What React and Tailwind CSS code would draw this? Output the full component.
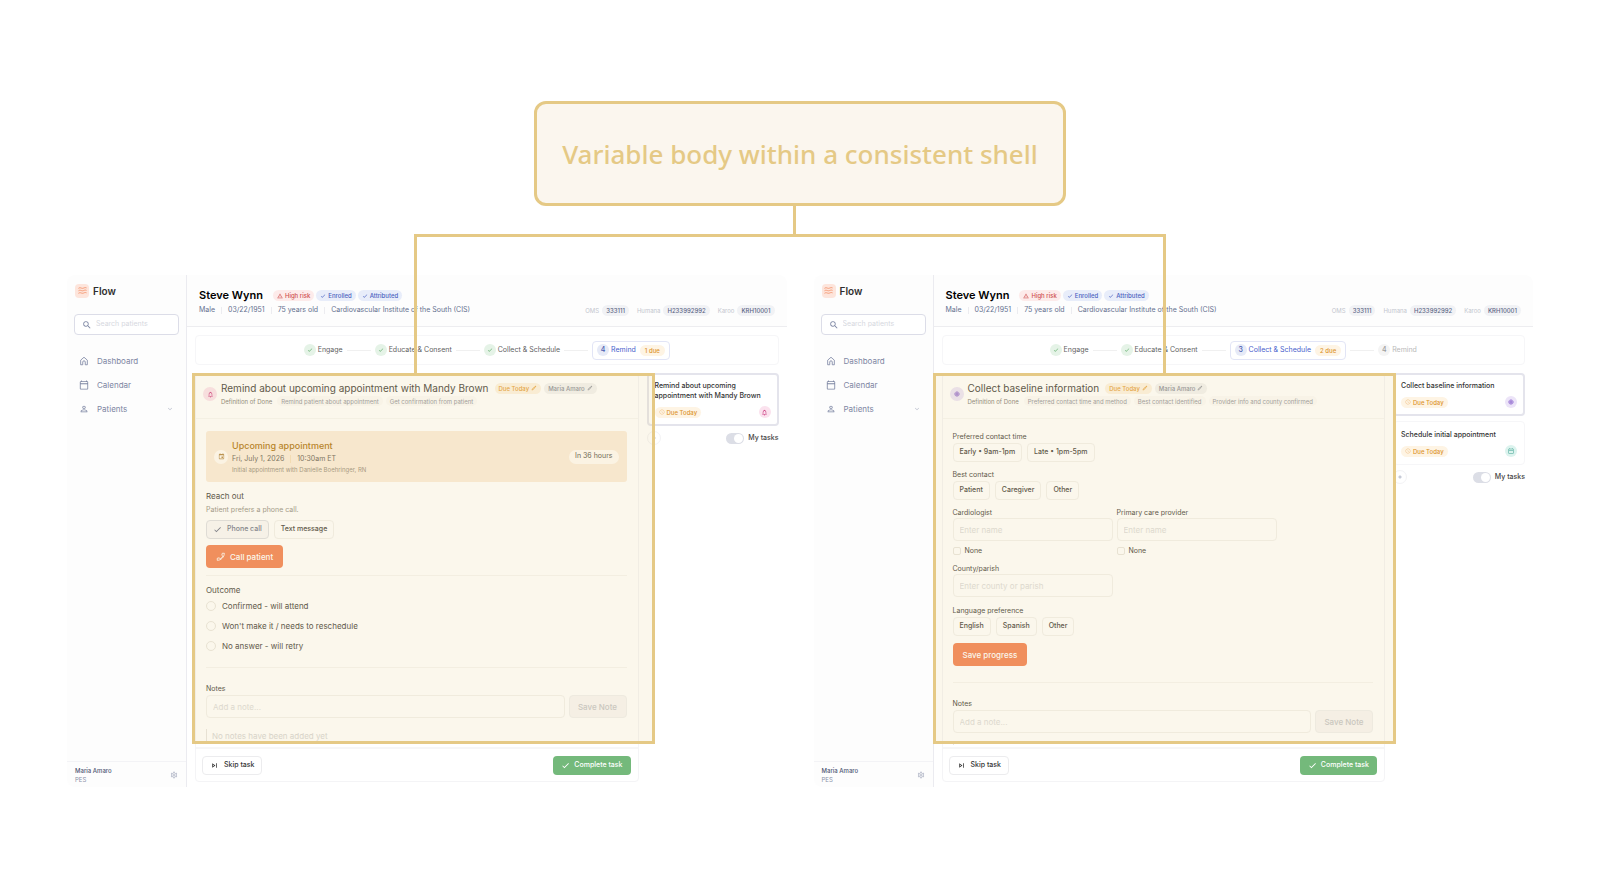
import React, { useState } from "react";
import {
    MdSearch,
    MdCheck,
    MdOutlineCalendarToday,
    MdOutlineSettings,
    MdPersonOutline,
    MdKeyboardArrowDown,
    MdWarningAmber,
    MdNotificationsNone,
    MdEvent,
    MdOutlineEdit,
    MdAccessTime,
    MdOutlineSkipNext,
    MdAdd,
    MdLanguage,
} from "react-icons/md";

const labelStyle = "text-[7px] leading-[10px] text-[#4a473f]";
const inputStyle = "h-[23px] w-full rounded-[4px] border border-[#f2f1ee] bg-transparent px-[6px] text-[8px] text-[#4a473f] placeholder:text-[#dcdcdc] outline-none";
const optionStyle = "flex h-[19px] items-center rounded-[4px] border border-[#f2f1ee] px-[6px] text-[7px] font-medium text-[#4a473f]";

function HomeIcon() {
    return (
        <svg viewBox="0 0 24 24" className="size-[10px]" fill="none" stroke="currentColor" strokeWidth="2">
            <path d="M4 10 12 3l8 7v11h-5v-6.500a3 3 0 0 0-6 0V21H4z" />
        </svg>
    );
}

function PhoneIcon() {
    return (
        <svg viewBox="0 0 24 24" className="size-[10px]" fill="none" stroke="currentColor" strokeWidth="2">
            <path d="M15 3h5c0 9-8 17-17 17v-5l5-1 2 2.500a14 14 0 0 0 6.500-6.500L14 8z" />
        </svg>
    );
}

function Waves() {
    return (
        <span className="flex size-[14px] items-center justify-center rounded-[4px] bg-[#fde5dc] text-[#f4936b]">
            <svg viewBox="0 0 20 16" className="w-[9px]" fill="none" stroke="currentColor" strokeWidth="2">
                <path d="M1 3c4-3 6 0 9 0s5-3 9-1M1 8.500c4-3 6 0 9 0s5-3 9-1M1 14c4-3 6 0 9 0s5-3 9-1" />
            </svg>
        </span>
    );
}

function Sidebar({ id }) {
    return (
        <aside className="flex w-[120px] shrink-0 flex-col rounded-l-lg border-r border-[#ebebf0] bg-[#fdfdfd]">
            <div className="flex items-center gap-1 px-2 pt-[9px] text-[10px] leading-[14px] font-semibold text-[#2f2f2f]">
                <Waves />
                Flow
            </div>
            <label htmlFor={id + "-search"} className="mx-[7px] mt-4 flex h-[21px] items-center gap-1 rounded-[4px] border border-[#dcdde8] bg-white px-[7px] text-[#7d86a3]">
                <MdSearch className="size-[10px] shrink-0" />
                <input id={id + "-search"} type="text" placeholder="Search patients" className="w-full min-w-0 bg-transparent text-[7px] outline-none placeholder:text-[#d6d8e0]" />
            </label>
            <nav className="mt-5 flex flex-col gap-3 px-3 text-[8px] leading-[12px] text-[#7d86a3]">
                <a href="#dashboard" className="flex items-center gap-2"><HomeIcon />Dashboard</a>
                <a href="#calendar" className="flex items-center gap-2"><MdOutlineCalendarToday className="size-[10px]" />Calendar</a>
                <a href="#patients" className="flex items-center gap-2">
                    <MdPersonOutline className="size-[10px]" />Patients
                    <MdKeyboardArrowDown className="ml-auto size-[8px] text-[#b9bdcc]" />
                </a>
            </nav>
            <div className="mt-auto flex items-center justify-between border-t border-[#f3f3f6] px-2 pt-1 pb-[3px]">
                <div className="text-[6px] leading-[9px] text-[#8a91a8]">
                    <p className="font-medium text-[#4d5573]">Maria Amaro</p>
                    <p>PES</p>
                </div>
                <button aria-label="Settings" className="text-[#aeb3c4]"><MdOutlineSettings className="size-[8px]" /></button>
            </div>
        </aside>
    );
}

function HeaderBadge({ risk, children }) {
    return (
        <span className={"flex h-[11px] items-center gap-[2px] rounded-full px-1 text-[6px] font-medium " + (risk ? "bg-[#fdebea] text-[#cf5050]" : "bg-[#e8edfa] text-[#4961c0]")}>
            {risk ? <MdWarningAmber className="size-[6px]" /> : <MdCheck className="size-[6px]" />}
            {children}
        </span>
    );
}

function PatientHeader() {
    const ids = [["OMS", "333111"], ["Humana", "H233992992"], ["Karoo", "KRH10001"]];
    return (
        <header className="h-[52px] rounded-tr-lg border-b border-[#ededf0] bg-[#fdfdfd] px-3 pt-[13px]">
            <div className="flex items-center gap-[2px]">
                <h1 className="mr-2 text-[11px] leading-[15px] font-semibold text-black">Steve Wynn</h1>
                <HeaderBadge risk>High risk</HeaderBadge>
                <HeaderBadge>Enrolled</HeaderBadge>
                <HeaderBadge>Attributed</HeaderBadge>
            </div>
            <div className="flex h-[14px] items-center justify-between text-[7px] text-[#64708f]">
                <div className="flex items-center gap-[6px]">
                    <span>Male</span>
                    <span className="h-[7px] w-px bg-[#ececf0]" />
                    <span>03/22/1951</span>
                    <span className="h-[7px] w-px bg-[#ececf0]" />
                    <span>75 years old</span>
                    <span className="h-[7px] w-px bg-[#ececf0]" />
                    <span>Cardiovascular Institute of the South (CIS)</span>
                </div>
                <div className="flex items-center gap-2 text-[6px] text-[#c3c6ce]">
                    {ids.map(([name, value]) => (
                        <span key={name} className="flex items-center gap-[3px]">
                            {name}
                            <span className="flex h-[11px] items-center rounded-full bg-[#f1f2f5] px-1 font-medium text-[#5d6785]">{value}</span>
                        </span>
                    ))}
                </div>
            </div>
        </header>
    );
}

function Stepper({ active, due }) {
    const steps = ["Engage", "Educate & Consent", "Collect & Schedule", "Remind"];
    return (
        <ol className="flex h-[30px] items-center justify-center gap-1 rounded-[4px] border border-[#f6f6f8] bg-white text-[7px]">
            {steps.map((step, index) => {
                const number = index + 1;
                const isActive = number === active;
                const isDone = number < active;
                return (
                    <React.Fragment key={step}>
                        {index > 0 && <li aria-hidden="true" className="h-px w-6 bg-[#f0f0f0]" />}
                        <li className={"flex items-center gap-[2px] " + (isActive ? "h-[19px] rounded-[4px] border border-[#e2e5f6] px-1 text-[#4860cc]" : isDone ? "text-[#5f5f5f]" : "text-[#b9b9b9]")}>
                            <span className={"flex size-[12px] items-center justify-center rounded-full font-medium " + (isActive ? "bg-[#e6eaf7] text-[#4a5db0]" : isDone ? "bg-[#e5f3e7] text-[#5cab67]" : "bg-[#f4f4f4] text-[#9c9c9c]")}>
                                {isDone ? <MdCheck className="size-[6px]" /> : number}
                            </span>
                            {step}
                            {isActive && <span className="ml-[2px] flex h-[11px] items-center rounded-full bg-[#fef4e4] px-[5px] text-[6px] font-medium text-[#dc932b]">{due} due</span>}
                        </li>
                    </React.Fragment>
                );
            })}
        </ol>
    );
}

function TaskIcon({ type, small }) {
    const size = small ? "size-[12px]" : "size-[14px]";
    const colors = {
        remind: "bg-[#fbe2ee] text-[#cc3f83]",
        collect: "bg-[#ece4f8] text-[#8a62cc]",
        schedule: "bg-[#dcf3ee] text-[#3a9f8d]",
    };
    return (
        <span className={"flex shrink-0 items-center justify-center rounded-full " + size + " " + colors[type]}>
            {type === "remind" && <MdNotificationsNone className="size-[7px]" />}
            {type === "collect" && <MdLanguage className="size-[6px]" />}
            {type === "schedule" && <MdOutlineCalendarToday className="size-[6px]" />}
        </span>
    );
}

function TaskCard({ title, type, selected }) {
    return (
        <article className={"rounded-[4px] bg-white " + (selected ? "border-2 border-[#e4e4ec] px-[6px] py-[6px]" : "border border-[#f6f6f8] px-[7px] pt-2 pb-[7px]")}>
            <h3 className="text-[7px] leading-[10px] font-medium text-[#333333]">{title}</h3>
            <div className="mt-[5px] flex h-[12px] items-center justify-between">
                <span className="flex h-[11px] items-center gap-[2px] rounded-full bg-[#fef4e4] px-1 text-[6px] font-medium text-[#dc932b]">
                    <MdAccessTime className="size-[6px] text-[#f0c48a]" />
                    Due Today
                </span>
                <TaskIcon type={type} small />
            </div>
        </article>
    );
}

function TaskList({ id, tasks }) {
    return (
        <aside className="flex w-[132px] shrink-0 flex-col gap-[5px]">
            {tasks.map((task, index) => (
                <TaskCard key={task.title} title={task.title} type={task.type} selected={index === 0} />
            ))}
            <div className="flex items-center justify-between">
                <button aria-label="Add task" className="flex size-[14px] items-center justify-center rounded-full border border-[#f3f3f5] text-[#7d86a3]"><MdAdd className="size-[6px]" /></button>
                <label htmlFor={id + "-mine"} className="flex items-center gap-1 text-[7px] font-medium text-[#444444]">
                    <input id={id + "-mine"} type="checkbox" defaultChecked className="peer sr-only" />
                    <span className="flex h-[11px] w-[18px] items-center justify-end rounded-full bg-[#dcdee6] px-px"><span className="size-[9px] rounded-full bg-white" /></span>
                    My tasks
                </label>
            </div>
        </aside>
    );
}

function Notes({ id }) {
    return (
        <div className="border-t border-[#f6f5f2] pt-4">
            <label htmlFor={id + "-note"} className={"block " + labelStyle}>Notes</label>
            <div className="mt-px flex gap-1">
                <input id={id + "-note"} type="text" placeholder="Add a note..." className={inputStyle} />
                <button disabled className="h-[23px] w-[58px] shrink-0 rounded-[4px] border border-[#f0f0f0] bg-[#f8f6f6] text-[8px] font-medium text-[#c6c7ca]">Save Note</button>
            </div>
            <p className="mt-[11px] border-l border-[#e8e6e2] pl-[5px] text-[8px] leading-[14px] text-[#d6d6d6]">No notes have been added yet</p>
        </div>
    );
}

function RemindBody() {
    const [outcome, setOutcome] = useState("");
    const outcomes = ["Confirmed - will attend", "Won't make it / needs to reschedule", "No answer - will retry"];
    return (
        <div className="pt-3 pr-[11px] pl-[10px]">
            <section className="flex h-[51px] items-center gap-1 rounded-[3px] bg-[#fbeddb] px-2">
                <span className="flex size-[14px] items-center justify-center rounded-full bg-[#fffbf5] text-[#b58a48]"><MdEvent className="size-[7px]" /></span>
                <div className="text-[#6d675c]">
                    <h3 className="text-[9px] leading-[14px] font-medium text-[#b07818]">Upcoming appointment</h3>
                    <p className="flex items-center gap-[6px] text-[7px] leading-[12px]">
                        Fri, July 1, 2026
                        <span className="h-[8px] w-px bg-[#f6e0bd]" />
                        10:30am ET
                    </p>
                    <p className="text-[6px] leading-[10px] text-[#9c9383]">Initial appointment with Danielle Boehringer, RN</p>
                </div>
                <span className="ml-auto flex h-[14px] items-center rounded-full bg-[#fffbf5] px-[6px] text-[7px] text-[#5c574d]">In 36 hours</span>
            </section>
            <h3 className="mt-2 text-[8px] leading-[12px] text-[#4a473f]">Reach out</h3>
            <p className="mt-[3px] text-[7px] leading-[10px] text-[#98948b]">Patient prefers a phone call.</p>
            <div className="mt-[5px] flex gap-[5px]">
                <button className="flex h-[19px] items-center gap-[5px] rounded-[4px] border border-[#dfe0e4] bg-[#f9f8fa] px-[6px] text-[7px] font-medium text-[#73798c]"><MdCheck className="size-[9px]" />Phone call</button>
                <button className={optionStyle}>Text message</button>
            </div>
            <button className="mt-[6px] flex h-[23px] items-center gap-1 rounded-[4px] bg-[#f28557] px-[10px] text-[8px] font-medium text-white"><PhoneIcon />Call patient</button>
            <div role="radiogroup" aria-labelledby="outcome-title" className="mt-[7px] border-t border-[#f6f5f2] pt-2 pb-[15px]">
                <h3 id="outcome-title" className="text-[8px] leading-[12px] text-[#4a473f]">Outcome</h3>
                <div className="mt-1 flex flex-col gap-2">
                    {outcomes.map((item) => (
                        <label key={item} className="flex items-center gap-[6px] text-[8px] leading-[12px] text-[#4a473f]">
                            <input type="radio" name="outcome" value={item} checked={outcome === item} onChange={() => setOutcome(item)} className="size-[10px] appearance-none rounded-full border border-[#e9e7e1] checked:border-[3px] checked:border-[#f28557]" />
                            {item}
                        </label>
                    ))}
                </div>
            </div>
            <Notes id="remind" />
        </div>
    );
}

function Options({ label, options }) {
    return (
        <div role="group" aria-label={label}>
            <p className={labelStyle}>{label}</p>
            <div className="mt-px flex gap-[5px]">
                {options.map((option) => (
                    <button key={option} className={optionStyle}>{option}</button>
                ))}
            </div>
        </div>
    );
}

function Field({ id, label, placeholder, none }) {
    return (
        <div className="w-[160px]">
            <label htmlFor={id} className={"block " + labelStyle}>{label}</label>
            <input id={id} type="text" placeholder={placeholder} className={"block " + inputStyle} />
            {none && (
                <label className={"mt-[5px] flex items-center gap-1 " + labelStyle}>
                    <input type="checkbox" className="size-[8px] appearance-none rounded-[2px] border border-[#e9e7e1] checked:bg-[#f28557]" />
                    None
                </label>
            )}
        </div>
    );
}

function CollectBody() {
    return (
        <div className="pt-[13px] pr-[11px] pl-[10px]">
            <div className="flex flex-col gap-2">
                <Options label="Preferred contact time" options={["Early • 9am-1pm", "Late • 1pm-5pm"]} />
                <Options label="Best contact" options={["Patient", "Caregiver", "Other"]} />
                <div className="flex gap-1">
                    <Field id="cardiologist" label="Cardiologist" placeholder="Enter name" none />
                    <Field id="provider" label="Primary care provider" placeholder="Enter name" none />
                </div>
                <div className="pb-px">
                    <Field id="county" label="County/parish" placeholder="Enter county or parish" />
                </div>
                <Options label="Language preference" options={["English", "Spanish", "Other"]} />
            </div>
            <button className="mt-[7px] mb-4 flex h-[23px] items-center rounded-[4px] bg-[#f28557] px-[10px] text-[8px] font-medium text-white">Save progress</button>
            <Notes id="collect" />
        </div>
    );
}

function TaskPanel({ type, title, done, children }) {
    return (
        <section className="min-w-0 flex-1 rounded-[4px] border border-[#f4f4f6] bg-white">
            <div className="flex h-[45px] items-center gap-1 border-b border-[#f7f7f5] px-[7px] pb-1">
                <TaskIcon type={type} />
                <div>
                    <div className="flex items-center gap-[3px]">
                        <h2 className="mr-[3px] text-[10px] leading-[14px] text-[#4a473f]">{title}</h2>
                        <span className="flex h-[11px] items-center gap-[2px] rounded-full bg-[#fdf3e2] px-1 text-[6px] font-medium text-[#e5a03c]">Due Today<MdOutlineEdit className="size-[6px]" /></span>
                        <span className="flex h-[11px] items-center gap-[2px] rounded-full bg-[#f3f3f2] px-1 text-[6px] font-medium text-[#8b8f9a]">Maria Amaro<MdOutlineEdit className="size-[6px]" /></span>
                    </div>
                    <div className="flex h-[12px] items-center gap-[3px] text-[6px] text-[#85817a]">
                        <span className="mr-[2px]">Definition of Done</span>
                        {done.map((item) => (
                            <span key={item} className="flex h-[10px] items-center rounded-full bg-[#fcfbfa] px-1 text-[#96989f]">{item}</span>
                        ))}
                    </div>
                </div>
            </div>
            <div className="mb-[2px] h-[326px] overflow-hidden">{children}</div>
            <footer className="flex h-[34px] items-center justify-between border-t-2 border-[#f6f6f7] pr-[7px] pl-[6px]">
                <button className="flex h-[19px] items-center gap-[5px] rounded-[4px] border border-[#ececee] px-[7px] text-[7px] font-medium text-[#333333]"><MdOutlineSkipNext className="size-[9px]" />Skip task</button>
                <button className="flex h-[19px] items-center gap-1 rounded-[4px] bg-[#74b97b] px-2 text-[7px] font-medium text-white"><MdCheck className="size-[9px]" />Complete task</button>
            </footer>
        </section>
    );
}

function Shell({ id, active, due, type, title, done, tasks, frame, children }) {
    return (
        <div className="relative flex">
            <Sidebar id={id} />
            <main className="min-w-0 flex-1">
                <PatientHeader />
                <div className="flex flex-col gap-2 px-2 pt-2 pb-[5px]">
                    <Stepper active={active} due={due} />
                    <div className="flex items-stretch gap-2">
                        <TaskPanel type={type} title={title} done={done}>{children}</TaskPanel>
                        <TaskList id={id} tasks={tasks} />
                    </div>
                </div>
            </main>
            <div className={"pointer-events-none absolute top-[98px] h-[371px] w-[463px] border-[3px] border-[#e5c985] bg-[#e6c67d]/15 " + frame} />
        </div>
    );
}

export default function App() {
    return (
        <div className="bg-white pt-[101px] pb-[102px] font-['Inter',sans-serif]">
            <div className="relative mx-auto flex h-[105px] w-[532px] items-center justify-center rounded-xl border-[3px] border-[#e5c985] bg-[#fbf6ee]">
                <h1 className="font-['Noto_Sans',sans-serif] text-[26px] leading-[36px] font-medium whitespace-nowrap text-[#e5c985]">Variable body within a consistent shell</h1>
                <span className="absolute top-full left-[256px] mt-[3px] h-[28px] w-[3px] bg-[#e5c985]" />
            </div>
            <div className="relative mt-[69px] grid grid-cols-2 gap-[27px] px-[67px]">
                <Shell
                    id="left"
                    active={4}
                    due={1}
                    type="remind"
                    title="Remind about upcoming appointment with Mandy Brown"
                    done={["Remind patient about appointment", "Get confirmation from patient"]}
                    tasks={[{ title: "Remind about upcoming appointment with Mandy Brown", type: "remind" }]}
                    frame="left-[125px]"
                >
                    <RemindBody />
                </Shell>
                <Shell
                    id="right"
                    active={3}
                    due={2}
                    type="collect"
                    title="Collect baseline information"
                    done={["Preferred contact time and method", "Best contact identified", "Provider info and county confirmed"]}
                    tasks={[{ title: "Collect baseline information", type: "collect" }, { title: "Schedule initial appointment", type: "schedule" }]}
                    frame="left-[119px]"
                >
                    <CollectBody />
                </Shell>
                <div className="pointer-events-none absolute -top-[41px] right-[434px] left-[414px] h-[139px] border-[3px] border-b-0 border-[#e5c985]" />
            </div>
        </div>
    );
}
